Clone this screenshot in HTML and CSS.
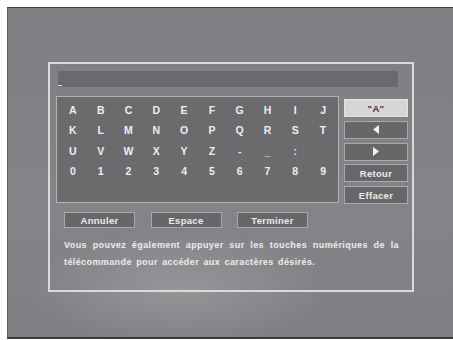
FILE: index.html
```html
<!DOCTYPE html>
<html>
<head>
<meta charset="utf-8">
<link rel="stylesheet" href="styles.css">
</head>
<body>
<div class="screen">
  <div class="dialog">
    <div class="input-bar"><span class="cursor"></span></div>
    <div class="kb-row">
      <div class="panel">
        <span class="key">A</span><span class="key">B</span><span class="key">C</span><span class="key">D</span><span class="key">E</span><span class="key">F</span><span class="key">G</span><span class="key">H</span><span class="key">I</span><span class="key">J</span>
        <span class="key">K</span><span class="key">L</span><span class="key">M</span><span class="key">N</span><span class="key">O</span><span class="key">P</span><span class="key">Q</span><span class="key">R</span><span class="key">S</span><span class="key">T</span>
        <span class="key">U</span><span class="key">V</span><span class="key">W</span><span class="key">X</span><span class="key">Y</span><span class="key">Z</span><span class="key">-</span><span class="key">_</span><span class="key">:</span><span class="key"></span>
        <span class="key">0</span><span class="key">1</span><span class="key">2</span><span class="key">3</span><span class="key">4</span><span class="key">5</span><span class="key">6</span><span class="key">7</span><span class="key">8</span><span class="key">9</span>
      </div>
      <div class="side">
        <div class="sbtn active">"A"</div>
        <div class="sbtn"><svg width="6" height="9" viewBox="0 0 6 9"><polygon points="6,0 6,9 0,4.5" fill="#f2f2f2"/></svg></div>
        <div class="sbtn"><svg width="6" height="9" viewBox="0 0 6 9"><polygon points="0,0 0,9 6,4.5" fill="#f2f2f2"/></svg></div>
        <div class="sbtn">Retour</div>
        <div class="sbtn">Effacer</div>
      </div>
    </div>
    <div class="bottom">
      <div class="actions">
        <div class="btn">Annuler</div>
        <div class="btn">Espace</div>
        <div class="btn">Terminer</div>
      </div>
      <p class="info">Vous pouvez également appuyer sur les touches numériques de la télécommande pour accéder aux caractères désirés.</p>
    </div>
  </div>
</div>
</body>
</html>
```
FILE: styles.css
```css
html, body {
  margin: 0;
  padding: 0;
  background: #ffffff;
}
body {
  font-family: "Liberation Sans", Arial, sans-serif;
  font-weight: bold;
  color: #ececec;
}
.screen {
  margin: 7px 0 0 7px;
  width: 446px;
  height: 332px;
  box-sizing: border-box;
  border-top: 1px solid #3c3c3e;
  border-left: 1px solid #5c5c5e;
  border-bottom: 2px solid #3a3a3c;
  padding: 54px 0 0 40px;
  background:
    radial-gradient(ellipse 150px 60px at 170px 280px, rgba(255,255,255,0.16), rgba(255,255,255,0) 100%),
    linear-gradient(180deg, #7f7f83 0%, #848488 60%, #808084 100%);
}
.dialog {
  width: 366px;
  height: 230px;
  box-sizing: border-box;
  border: 2px solid #dadada;
  padding: 7px 0 0 0;
}
.input-bar {
  margin-left: 8px;
  width: 340px;
  height: 16px;
  background: #6a6a6d;
  display: flex;
  align-items: flex-end;
}
.cursor {
  display: block;
  width: 4px;
  height: 1px;
  margin-bottom: 1px;
  background: #dddddd;
}
.kb-row {
  display: flex;
  gap: 5px;
  margin: 9px 0 0 6px;
}
.panel {
  width: 283px;
  height: 107px;
  box-sizing: border-box;
  border: 1px solid #b2b2b4;
  background: #6b6b6e;
  padding: 3px 0 0 2px;
  display: grid;
  grid-template-columns: repeat(10, 27.8px);
  grid-auto-rows: 20.3px;
}
.key {
  display: flex;
  align-items: center;
  justify-content: center;
  font-size: 10.5px;
  color: #eeeeee;
}
.side {
  margin-top: 3px;
  width: 64px;
  display: flex;
  flex-direction: column;
  gap: 3.75px;
}
.sbtn {
  height: 18px;
  box-sizing: border-box;
  border: 1px solid #a9a9ab;
  background: #67676a;
  display: flex;
  align-items: center;
  justify-content: center;
  font-size: 9.5px;
  letter-spacing: 0.3px;
  color: #ececec;
}
.sbtn.active {
  background: #d6d6d6;
  border-color: #e4e4e4;
  color: #3a3a3a;
}
.bottom {
  padding-left: 14px;
}
.actions {
  display: flex;
  gap: 15.5px;
  margin-top: 8px;
}
.btn {
  width: 71px;
  height: 16px;
  box-sizing: border-box;
  border: 1px solid #a9a9ab;
  background: #67676a;
  display: flex;
  align-items: center;
  justify-content: center;
  font-size: 9.5px;
  letter-spacing: 0.3px;
  color: #ececec;
}
.info {
  margin: 9px 0 0 0;
  width: 335px;
  font-size: 9px;
  line-height: 17px;
  letter-spacing: 0.4px;
  word-spacing: 1.5px;
  text-align: justify;
  color: #ececec;
}
```
